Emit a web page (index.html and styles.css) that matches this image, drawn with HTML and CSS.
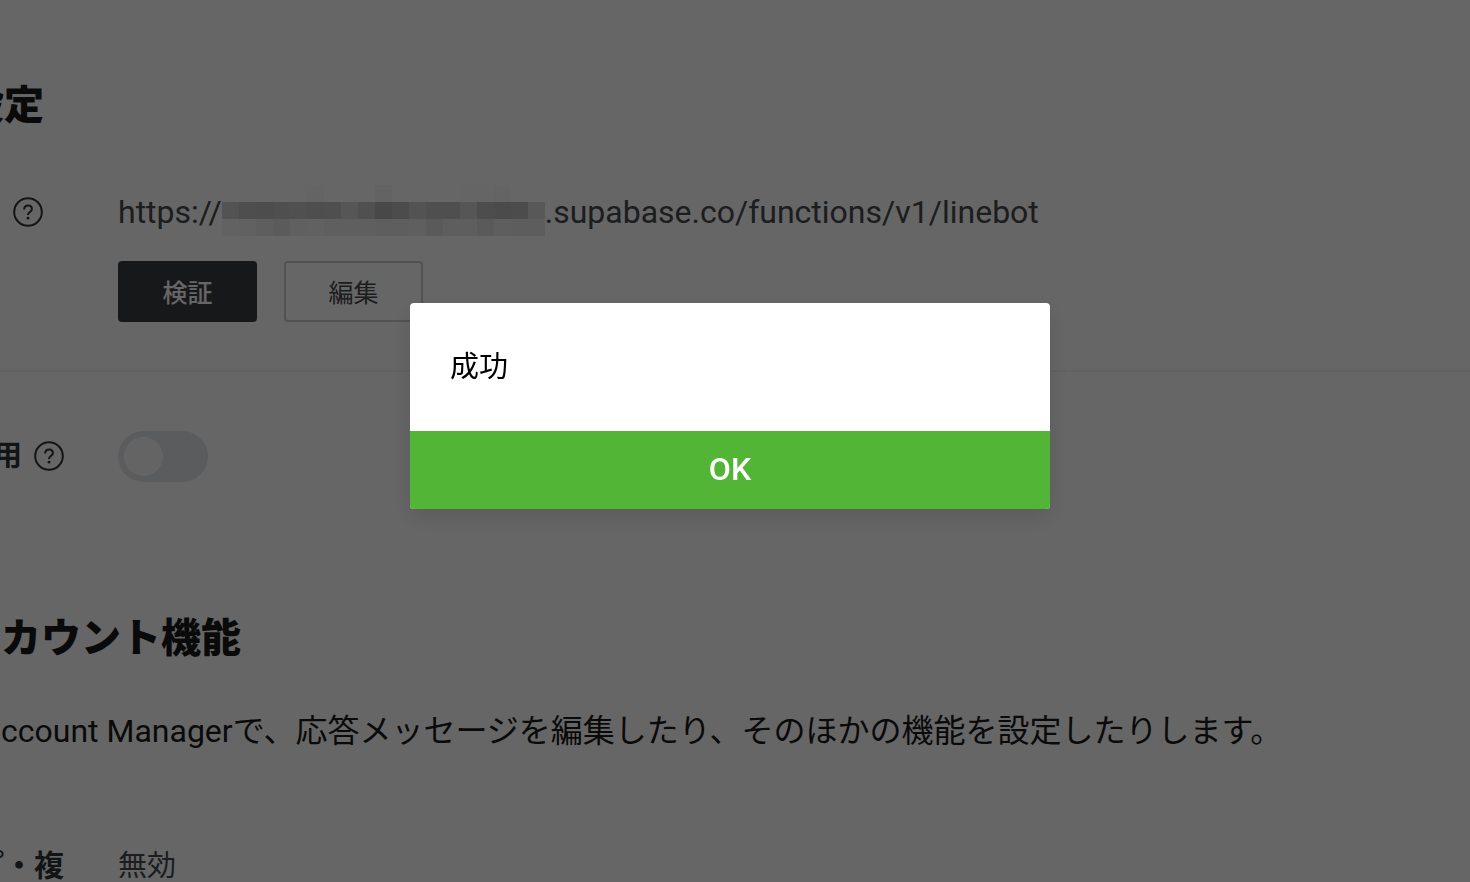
FILE: index.html
```html
<!DOCTYPE html>
<html lang="ja">
<head>
    <meta charset="UTF-8">
    <meta name="viewport" content="width=device-width, initial-scale=1.0">
    <title>設定</title>
    <link rel="stylesheet" href="styles.css">
</head>
<body>
    <main class="page">
        <section class="section">
            <h2>設定</h2>

            <div class="row">
                <div class="label label-icon">
                    <svg class="help" viewBox="0 0 30 30"><circle cx="15" cy="15" r="13.8"/><path d="M11.2 12.4c0-2.3 1.6-3.9 3.9-3.9s3.8 1.5 3.8 3.5c0 3-3.9 3.1-3.9 5.9"/><circle class="dot" cx="15" cy="21.2" r="1.4"/></svg>
                </div>
                <div class="value">
                    <p class="url">https://<svg class="mosaic" id="mosaic" viewBox="0 0 323 51" shape-rendering="crispEdges"></svg>.supabase.co/functions/v1/linebot</p>
                    <div class="buttons">
                        <button class="btn btn-dark" type="button">検証</button>
                        <button class="btn" type="button">編集</button>
                    </div>
                </div>
            </div>

            <div class="row row-line">
                <div class="label">
                    <label for="webhook">利用</label>
                    <svg class="help" viewBox="0 0 30 30"><circle cx="15" cy="15" r="13.8"/><path d="M11.2 12.4c0-2.3 1.6-3.9 3.9-3.9s3.8 1.5 3.8 3.5c0 3-3.9 3.1-3.9 5.9"/><circle class="dot" cx="15" cy="21.2" r="1.4"/></svg>
                </div>
                <div class="value">
                    <input class="toggle" type="checkbox" id="webhook">
                </div>
            </div>
        </section>

        <section class="section">
            <div class="intro">
                <h2>カウント機能</h2>
                <p class="description">ccount Managerで、応答メッセージを編集したり、そのほかの機能を設定したりします。</p>
            </div>

            <div class="row row-last">
                <div class="label label-end">プ・複</div>
                <div class="value">無効</div>
            </div>
        </section>
    </main>

    <!-- Dialog -->
    <div class="overlay">
        <div class="dialog" role="alertdialog" aria-modal="true" aria-describedby="message">
            <p class="message" id="message">成功</p>
            <button class="ok" type="button">OK</button>
        </div>
    </div>

    <script src="script.js"></script>
</body>
</html>
```
FILE: styles.css
```css
* {
    box-sizing: border-box;
}
body {
    margin: 0;
    height: 100vh;
    overflow: hidden;
    background: #ffffff;
    color: #1b1b1b;
    font-family: Roboto, "Noto Sans CJK JP", sans-serif;
    font-size: 29px;
    line-height: 40px;
}
h2, p {
    margin: 0;
}
.page {
    margin-left: -36px;
    padding-top: 78px;
}
h2 {
    font-size: 40px;
    font-weight: 900;
    line-height: 56px;
}
.row {
    display: flex;
    gap: 54px;
    padding: 58px 0 48px;
}
.row-line {
    border-top: 2px solid #f2f2f2;
    padding: 59px 0 129px;
}
.label {
    display: flex;
    align-items: center;
    justify-content: space-between;
    flex: none;
    width: 100px;
    height: 40px;
    font-weight: 700;
    color: #303338;
    white-space: nowrap;
}
.row-line .label {
    height: 50px;
}
.label-icon {
    padding-left: 49px;
}
.label-end {
    justify-content: flex-end;
    font-size: 30px;
}
.help {
    flex: none;
    width: 30px;
    height: 30px;
    fill: none;
    stroke: #303338;
    stroke-width: 2;
}
.help .dot {
    fill: #303338;
    stroke: none;
}
.value {
    color: #47494d;
}
.url {
    display: flex;
    font-size: 32px;
    white-space: nowrap;
}
.mosaic {
    flex: none;
    width: 323px;
    height: 51px;
    margin: -7px 0 -4px;
}
.buttons {
    display: flex;
    gap: 27px;
    margin-top: 29px;
}
.btn {
    width: 139px;
    height: 61px;
    padding: 0 0 2px;
    border: 2px solid #cdced1;
    border-radius: 4px;
    background: #ffffff;
    color: #47494d;
    font-family: inherit;
    font-size: 25px;
}
.btn-dark {
    border-color: #3a3d42;
    background: #3a3d42;
    color: #ffffff;
    font-weight: 500;
}
.toggle {
    appearance: none;
    display: block;
    width: 90px;
    height: 51px;
    margin: 0;
    padding: 6px;
    border-radius: 26px;
    background: #e3e5e9;
}
.toggle::before {
    content: "";
    display: block;
    width: 39px;
    height: 39px;
    border-radius: 50%;
    background: #fbfbfb;
}
.intro {
    padding-left: 37px;
}
.description {
    margin-top: 44px;
    font-size: 32px;
    white-space: nowrap;
}
.row-last {
    padding: 95px 0 0;
}

/* Dialog */
.overlay {
    position: fixed;
    inset: 0;
    display: flex;
    justify-content: center;
    align-items: flex-start;
    padding: 303px 10px 0 0;
    background: rgba(0, 0, 0, 0.6);
}
.dialog {
    width: 100%;
    max-width: 640px;
    border-radius: 4px;
    overflow: hidden;
    background: #ffffff;
    box-shadow: 0 8px 24px rgba(0, 0, 0, 0.12);
}
.message {
    padding: 44px 40px;
    color: #000000;
}
.ok {
    display: block;
    width: 100%;
    height: 78px;
    padding: 0 0 2px;
    border: none;
    background: #53b535;
    color: #ffffff;
    font-family: inherit;
    font-size: 32px;
    font-weight: 500;
}
```
FILE: script.js
```javascript
// grey level of every 17px block that hides the project id
const blocks = [
    [254, 255, 255, 255, 255, 250, 255, 255, 255, 247, 255, 255, 255, 255, 252, 252, 251, 255, 255],
    [208, 194, 192, 197, 200, 194, 197, 215, 200, 180, 190, 208, 198, 198, 214, 192, 188, 190, 221],
    [244, 243, 236, 227, 241, 243, 237, 237, 237, 236, 236, 237, 224, 235, 236, 224, 234, 232, 232]
];
const mosaic = document.getElementById('mosaic');

blocks.forEach((line, y) => {
    line.forEach((level, x) => {
        const rect = document.createElementNS('http://www.w3.org/2000/svg', 'rect');
        rect.setAttribute('x', x * 17);
        rect.setAttribute('y', y * 17);
        rect.setAttribute('width', 17);
        rect.setAttribute('height', 17);
        rect.setAttribute('fill', `rgb(${level}, ${level}, ${level})`);
        mosaic.appendChild(rect);
    });
});
```
